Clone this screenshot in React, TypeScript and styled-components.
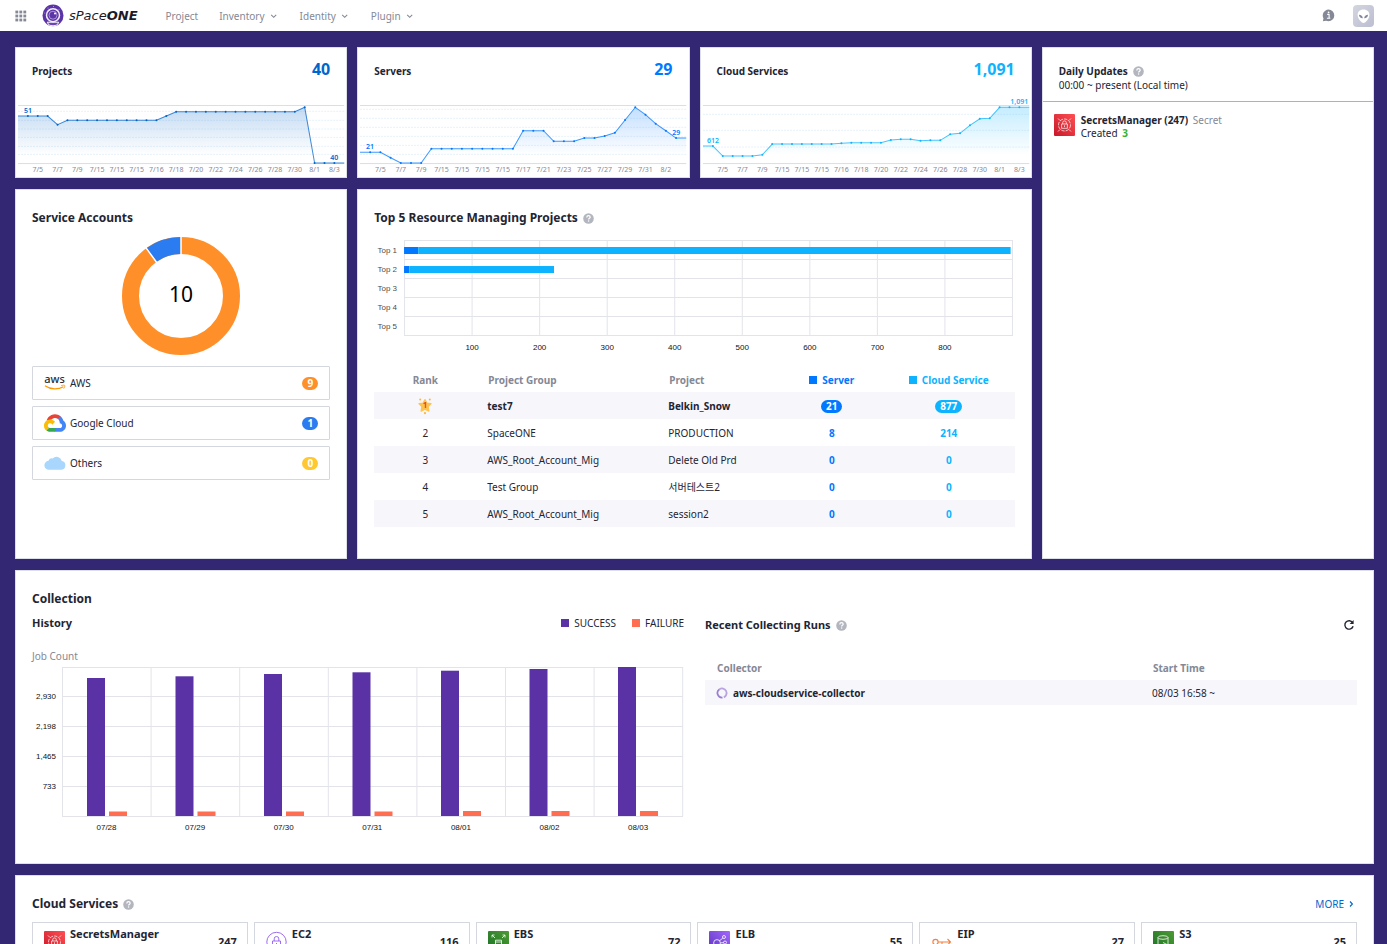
import React from "react";
import styled, { createGlobalStyle } from "styled-components";

const GlobalStyle = createGlobalStyle`
  * { box-sizing: border-box; }
  body {
    margin: 0;
    background: #332673;
    color: #232533;
    font-family: "Noto Sans", "Noto Sans CJK KR", sans-serif;
    font-size: 10px;
    line-height: 14px;
  }
  h2, h3, p, ul, dl { margin: 0; padding: 0; }
  ul { list-style: none; }
  button { font: inherit; color: inherit; background: none; border: 0; padding: 0; cursor: pointer; }
  svg { display: block; flex: none; }
`;

/* ---------- shell ---------- */

const Shell = styled.div`
  display: flex;
  flex-direction: column;
  height: 100vh;
`;

const TopBar = styled.header`
  display: flex;
  align-items: center;
  flex: none;
  height: 31px;
  padding: 0 13px 0 15px;
  background: #fff;
`;

const Brand = styled.a`
  display: flex;
  align-items: center;
  gap: 5px;
  margin-left: 15px;
  color: #1b1b2b;
  text-decoration: none;
`;

const BrandName = styled.span`
  font-family: "DejaVu Sans", sans-serif;
  font-size: 13px;
  line-height: 16px;
  font-style: italic;
  b { font-weight: 700; }
`;

const Nav = styled.nav`
  display: flex;
  flex: 1;
  gap: 21px;
  margin-left: 28px;
`;

const NavItem = styled.button`
  display: flex;
  align-items: center;
  gap: 5px;
  && { color: #858895; }
`;

const BarActions = styled.div`
  display: flex;
  align-items: center;
  gap: 18px;
`;

const Page = styled.main`
  flex: 1;
  overflow-y: auto;
  scrollbar-width: none;
  padding: 16px 13px 16px 15px;
`;

const Grid = styled.div`
  display: grid;
  grid-template-columns: repeat(4, minmax(0, 1fr));
  gap: 11px 10px;
`;

const Card = styled.section<{ $cols?: number; $rows?: number; $minHeight?: number }>`
  grid-column: span ${(p) => p.$cols ?? 1};
  grid-row: span ${(p) => p.$rows ?? 1};
  min-height: ${(p) => p.$minHeight ?? 0}px;
  background: #fff;
  border: 1px solid #dddfe6;
`;

const Padded = styled(Card)`
  padding: 20px 16px 18px;
`;

const Title = styled.h2<{ $size?: number }>`
  display: flex;
  align-items: center;
  gap: 5px;
  font-size: ${(p) => p.$size ?? 12}px;
  line-height: 16px;
  font-weight: 700;
`;

const SubTitle = styled.h3`
  display: flex;
  align-items: center;
  gap: 5px;
  font-size: 11px;
  line-height: 16px;
  font-weight: 700;
`;

const Spread = styled.div<{ $height?: number }>`
  display: flex;
  align-items: center;
  justify-content: space-between;
  height: ${(p) => (p.$height ? `${p.$height}px` : "auto")};
`;

const FluidSvg = styled.svg`
  width: 100%;
  height: auto;
`;

const AxisText = styled.text`
  font-family: "Liberation Sans", sans-serif;
  font-size: 8px;
  fill: #111;
`;

/* ---------- icons ---------- */

const HelpIcon = () => (
  <svg width="11" height="11" viewBox="0 0 11 11" aria-hidden="true">
    <circle cx="5.5" cy="5.5" r="5.3" fill="#b4b6bf" />
    <path d="M3.8 4.4c0-1.100.8-1.700 1.700-1.700s1.700.6 1.700 1.500c0 1.100-1.600 1.100-1.600 2.300" fill="none" stroke="#fff" strokeWidth="1.200" />
    <circle cx="5.600" cy="8.100" r=".75" fill="#fff" />
  </svg>
);

const ChevronDown = () => (
  <svg width="9" height="6" viewBox="0 0 9 6" aria-hidden="true">
    <path d="M1.200 1.800 3.700 4.300l2.500-2.500" fill="none" stroke="#858895" strokeWidth="1.100" />
  </svg>
);

const AppsIcon = () => (
  <svg width="12" height="12" viewBox="0 0 12 12" fill="#858895" aria-hidden="true">
    {[0, 1, 2].map((r) =>
      [0, 1, 2].map((c) => <rect key={`${r}${c}`} x={0.4 + c * 4} y={0.6 + r * 4} width="2.8" height="2.8" />),
    )}
  </svg>
);

const BrandMark = () => (
  <svg width="22" height="23" viewBox="0 0 22 23" aria-hidden="true">
    <ellipse cx="11" cy="11.400" rx="10.500" ry="10.900" fill="#5b34a6" />
    <path d="M5.300 18.200h11.400c-.6 2.400-2.600 3.600-5.700 3.600s-5.100-1.200-5.700-3.600Z" fill="#6b42b8" stroke="#fff" strokeWidth="1" />
    <circle cx="11" cy="11.200" r="6.500" fill="#5b34a6" stroke="#f1ecfa" strokeWidth="1.500" />
    <circle cx="11" cy="11.200" r="4" fill="#5b34a6" stroke="#b49be0" strokeWidth=".9" />
    <circle cx="13" cy="9.500" r="1" fill="#fff" />
    <g fill="#c3b0e8">
      <circle cx="6" cy="4" r=".5" />
      <circle cx="11.500" cy="2.400" r=".5" />
      <circle cx="17" cy="5.200" r=".5" />
      <circle cx="2.800" cy="9" r=".5" />
    </g>
  </svg>
);

const InfoIcon = () => (
  <svg width="13" height="13" viewBox="0 0 13 13" aria-hidden="true">
    <path d="M6.500.6a5.800 5.800 0 0 1 0 11.600c-.9 0-1.800-.2-2.500-.5L.9 12.300l.6-3A5.800 5.800 0 0 1 6.500.6Z" fill="#858895" />
    <path d="M5.200 5.400h1.900v3.800M4.900 9.300h3.400" stroke="#fff" strokeWidth="1.100" fill="none" />
    <circle cx="6.600" cy="3.300" r=".9" fill="#fff" />
  </svg>
);

const Avatar = () => (
  <svg width="21" height="22" viewBox="0 0 21 22" aria-hidden="true">
    <defs>
      <linearGradient id="avatar" x1="0" y1="0" x2="1" y2="1">
        <stop offset="0" stopColor="#d3d5df" />
        <stop offset="1" stopColor="#bcbed2" />
      </linearGradient>
    </defs>
    <rect width="21" height="22" rx="4" fill="url(#avatar)" />
    <path d="M10.500 4.500c3.700 0 5.900 2.400 5.900 5.300 0 3.800-3.700 8.200-5.900 8.200s-5.900-4.400-5.900-8.200c0-2.900 2.200-5.300 5.900-5.300Z" fill="#fff" />
    <path d="M6 9.800c2.200 0 3.700 1.200 3.800 3.400-2.200.1-3.800-1.300-3.800-3.400ZM15 9.800c-2.200 0-3.700 1.200-3.800 3.400 2.200.1 3.800-1.300 3.800-3.400Z" fill="#85889c" />
  </svg>
);

const AwsLogo = () => (
  <svg width="22" height="18" viewBox="0 0 22 18" overflow="visible" aria-hidden="true">
    <text x="10.500" y="9.200" textAnchor="middle" fontFamily="Noto Sans" fontSize="11" fontWeight="500" fill="#252f3e">aws</text>
    <path d="M1 11.800c5.600 4 13.200 4 18.400.9" fill="none" stroke="#ff9900" strokeWidth="1.300" />
    <path d="M17.200 11.700c1.500-.6 3-.7 3.500-.3.400.5-.1 2-1 3.200" fill="none" stroke="#ff9900" strokeWidth=".9" />
  </svg>
);

const GoogleCloudLogo = () => (
  <svg width="22" height="18" viewBox="0 0 256 206" aria-hidden="true">
    <path fill="#EA4335" d="M170.252 56.819 192.505 34.566 193.988 25.196C153.437-11.677 88.976-7.496 52.421 33.920 42.267 45.423 34.734 59.764 30.717 74.573L38.687 73.450 83.192 66.111 86.628 62.597C106.425 40.855 139.898 37.930 162.756 56.429Z" />
    <path fill="#4285F4" d="M224.205 73.918C219.090 55.082 208.589 38.149 193.988 25.196L162.756 56.428C175.944 67.204 183.457 83.438 183.135 100.465L183.135 106.009C198.486 106.009 210.932 118.454 210.932 133.805 210.932 149.157 198.486 161.290 183.135 161.290L127.464 161.290 121.998 167.224 121.998 200.564 127.464 205.795 183.135 205.795C223.065 206.106 255.687 174.301 255.998 134.371 256.186 110.168 244.253 87.478 224.205 73.918" />
    <path fill="#34A853" d="M71.870 205.796 127.463 205.796 127.463 161.290 71.870 161.290C67.909 161.289 64.073 160.438 60.471 158.792L52.584 161.212 30.175 183.465 28.223 191.039C40.790 200.528 56.123 205.864 71.870 205.796" />
    <path fill="#FBBC05" d="M71.870 61.426C31.939 61.664-.237 94.228.001 134.158.134 156.456 10.548 177.446 28.223 191.039L60.471 158.792C46.480 152.471 40.263 136.006 46.584 122.016 52.904 108.026 69.370 101.809 83.359 108.129 89.524 110.914 94.461 115.852 97.246 122.016L129.494 89.769C115.773 71.832 94.453 61.345 71.870 61.426" />
  </svg>
);

const CloudLogo = () => (
  <svg width="22" height="18" viewBox="0 0 22 18" fill="#a9d6fd" aria-hidden="true">
    <path d="M5.300 15.800a4.500 4.500 0 0 1-.8-9 3.800 3.800 0 0 1 4.200-2.400A5.400 5.400 0 0 1 17.800 6.900a4.500 4.500 0 0 1-.8 8.900Z" />
  </svg>
);

const RankStar = () => (
  <svg width="16" height="18" viewBox="0 0 16 18" aria-hidden="true">
    <path d="m8 2.600 1.900 3.500 4.200.6-2.900 2.900.7 4.600L8 12.300l-3.900 1.900.7-4.600-2.900-2.900 4.200-.6Z" fill="#ffc34d" stroke="#ffc34d" strokeWidth="1.200" strokeLinejoin="round" />
    <g fill="#ffb53a">
      <circle cx="3.200" cy="2.600" r="1" />
      <circle cx="12.800" cy="2.600" r="1" />
      <circle cx="8" cy="16.200" r="1.100" />
    </g>
    <text x="8" y="11" textAnchor="middle" fontFamily="Noto Sans" fontSize="8" fontWeight="700" fill="#e5452f">1</text>
  </svg>
);

const RefreshIcon = () => (
  <svg width="12" height="12" viewBox="0 0 12 12" aria-hidden="true">
    <path d="M9.600 3.600A4.200 4.200 0 1 0 10.100 7.200" fill="none" stroke="#232533" strokeWidth="1.400" />
    <path d="M10.600 1v4H6.600Z" fill="#232533" />
  </svg>
);

const SpinnerIcon = () => (
  <svg width="12" height="12" viewBox="0 0 12 12" aria-hidden="true">
    <path d="M3.500 2.200A4.600 4.600 0 1 1 7.800 10.300" fill="none" stroke="#b9a4e0" strokeWidth="1.800" />
    <path d="M6.500 10.600A4.600 4.600 0 0 1 3.500 2.200" fill="none" stroke="#9b7fd0" strokeWidth="1.800" />
  </svg>
);

type ServiceKind = "secrets" | "ec2" | "ebs" | "elb" | "eip" | "s3";

const tiles: Partial<Record<ServiceKind, [string, string]>> = {
  secrets: ["#c7182b", "#ff4f52"],
  ebs: ["#1c6f28", "#4d9a34"],
  elb: ["#5a34b8", "#a166ff"],
  s3: ["#1c6f28", "#4d9a34"],
};

const glyphs: Record<ServiceKind, React.ReactNode> = {
  secrets: (
    <g fill="none" stroke="#fff" strokeWidth=".7">
      <circle cx="10.500" cy="11" r="6" strokeDasharray="3.500 1" />
      <path d="M4 4.500 6 6.500M17 4.500l-2 2M4 17.500l2-2M17 17.500l-2-2" />
      <path d="M7.600 10h5.800v4.300H7.600ZM8.700 10V8.700a1.800 1.800 0 0 1 3.600 0V10M10.500 11.300v1.800" />
    </g>
  ),
  ec2: (
    <g fill="none" stroke="#9d6cf0" strokeWidth="1">
      <circle cx="10.500" cy="11" r="9.700" />
      <path d="M6.500 10h8v5.500h-8ZM8.200 10V7.800a2.300 2.300 0 0 1 4.600 0V10M10.500 12v1.700" />
    </g>
  ),
  ebs: (
    <g fill="none" stroke="#fff" strokeWidth=".8">
      <path d="M7.500 9.200h6V18h-6ZM7.500 11h6M4 4l3 3M17 4l-3 3M4 6.500V4h2.500M17 6.500V4h-2.500M4 18l2-2M17 18l-2-2" />
    </g>
  ),
  elb: (
    <g fill="none" stroke="#fff" strokeWidth=".8">
      <circle cx="8" cy="12" r="3.400" />
      <circle cx="15" cy="6" r="1.500" />
      <circle cx="16" cy="11.500" r="1.500" />
      <circle cx="15" cy="17" r="1.500" />
      <path d="m10.500 9.800 3.300-2.700M11.400 11.900l3.100-.2M10.500 14.200l3.300 2" />
    </g>
  ),
  eip: (
    <g fill="none" stroke="#f08044" strokeWidth="1.100">
      <circle cx="4.500" cy="11" r="2.600" />
      <path d="M7.100 11h12M16.500 8l3 3-3 3M11 11v3" />
    </g>
  ),
  s3: (
    <g fill="none" stroke="#fff" strokeWidth=".8">
      <ellipse cx="10" cy="6.500" rx="5" ry="1.800" />
      <path d="M5 6.500V16c0 2.300 10 2.300 10 0V6.500M10 11.500l6 3" />
    </g>
  ),
};

const ServiceIcon = ({ kind }: { kind: ServiceKind }) => {
  const tile = tiles[kind];
  const id = `tile-${kind}`;
  return (
    <svg width="21" height="22" viewBox="0 0 21 22" aria-hidden="true">
      {tile && (
        <>
          <defs>
            <linearGradient id={id} x1="0" y1="1" x2="1" y2="0">
              <stop offset="0" stopColor={tile[0]} />
              <stop offset="1" stopColor={tile[1]} />
            </linearGradient>
          </defs>
          <rect width="21" height="22" rx="1" fill={`url(#${id})`} />
        </>
      )}
      {glyphs[kind]}
    </svg>
  );
};

/* ---------- trend cards ---------- */

const TrendCard = styled(Card)`
  display: flex;
  flex-direction: column;
  justify-content: space-between;
`;

const TrendHead = styled.div`
  display: flex;
  align-items: center;
  justify-content: space-between;
  height: 45px;
  padding: 0 16px;
`;

const Total = styled.strong<{ $color: string }>`
  padding-bottom: 3px;
  font-size: 16px;
  line-height: 20px;
  color: ${(p) => p.$color};
`;

const TrendText = styled.text`
  font-family: "Noto Sans", sans-serif;
  font-size: 7px;
  text-anchor: middle;
`;

const TrendValue = styled(TrendText)`
  font-weight: 600;
`;

const fill = (n: number, v: number): number[] => Array(n).fill(v);

type Trend = {
  id: string;
  title: string;
  total: string;
  first: string;
  color: string;
  levels: number[];
  grid: number[];
  labels: string[];
};

const longLabels = "7/5 7/7 7/9 7/15 7/15 7/15 7/16 7/18 7/20 7/22 7/24 7/26 7/28 7/30 8/1 8/3".split(" ");

const trends: Trend[] = [
  {
    id: "projects",
    title: "Projects",
    total: "40",
    first: "51",
    color: "#0066cc",
    levels: [...fill(4, 23), 31.7, ...fill(10, 27.3), 23, ...fill(13, 18.7), 14.3, ...fill(4, 70)],
    grid: [18.3, 27.3, 36, 44.3, 53.3, 61.3],
    labels: longLabels,
  },
  {
    id: "servers",
    title: "Servers",
    total: "29",
    first: "21",
    color: "#0078ff",
    levels: [
      ...fill(3, 59.3), 64.7, ...fill(3, 70), ...fill(9, 55.7), ...fill(3, 37.7), ...fill(3, 48.3),
      45, 45, 43, 39.7, 27, 14.3, 21.7, 30.7, 37.7, 45, 45,
    ],
    grid: [16.3, 25.3, 34.3, 43.3, 52.3, 61.3],
    labels: "7/5 7/7 7/9 7/15 7/15 7/15 7/15 7/17 7/21 7/23 7/25 7/27 7/29 7/31 8/2".split(" "),
  },
  {
    id: "cloud",
    title: "Cloud Services",
    total: "1,091",
    first: "612",
    color: "#0db3ff",
    levels: [
      53, 53, ...fill(4, 63), 61.7, ...fill(7, 51), 50.3, ...fill(4, 49.7), 47, 46.3, 46.3, 47.7,
      47.3, 47.3, 41.3, 40.3, 32.3, 25.7, 25.3, ...fill(4, 14.3),
    ],
    grid: [21.3, 37.3, 54],
    labels: longLabels,
  },
];

const TrendPanel = ({ t }: { t: Trend }) => {
  const step = 326 / (t.levels.length - 1);
  const pts = t.levels.map((y, i) => [2 + i * step, y]);
  const line = pts.map(([x, y]) => `${x.toFixed(1)},${y}`).join(" ");
  return (
    <TrendCard $minHeight={131}>
      <TrendHead>
        <Title $size={10}>{t.title}</Title>
        <Total $color={t.color}>{t.total}</Total>
      </TrendHead>
      <FluidSvg viewBox="0 0 330 84" role="img" aria-label={t.title}>
        <defs>
          <linearGradient id={t.id} x1="0" y1="12" x2="0" y2="62" gradientUnits="userSpaceOnUse">
            <stop offset="0" stopColor={t.color} stopOpacity=".25" />
            <stop offset="1" stopColor={t.color} stopOpacity="0" />
          </linearGradient>
        </defs>
        {t.grid.map((y) => (
          <line key={y} x1="2" x2="328" y1={y} y2={y} stroke="#dcecf8" strokeWidth=".7" strokeDasharray="2 1" />
        ))}
        <path d="M2 12.500h326M2 70.500h326" stroke="#bcdcf2" strokeWidth=".8" />
        <polygon points={`2,70 ${line} 328,70`} fill={`url(#${t.id})`} />
        <polyline points={line} fill="none" stroke={t.color} strokeOpacity=".75" strokeWidth="1" />
        {pts.slice(1, -1).map(([x, y]) => (
          <circle key={x} cx={x} cy={y} r="1" fill={t.color} />
        ))}
        <TrendValue x="12" y={t.levels[0] - 3} fill={t.color}>{t.first}</TrendValue>
        <TrendValue x="318" y={t.levels[t.levels.length - 1] - 3} fill={t.color}>{t.total}</TrendValue>
        {t.labels.map((l, i) => (
          <TrendText key={i} x={2 + (2 + i * 2) * step} y="79" fill="#858895">{l}</TrendText>
        ))}
      </FluidSvg>
    </TrendCard>
  );
};

/* ---------- daily updates ---------- */

const DailyHead = styled.div`
  padding: 15px 16px 9px;
  border-bottom: 1px solid #b0b1ba;
  line-height: 13px;
`;

const UpdateRow = styled.div`
  display: flex;
  gap: 6px;
  padding: 12px 11px;
  line-height: 13px;
`;

const Muted = styled.span`
  margin-left: 2px;
  color: #858895;
`;

const Created = styled.b`
  margin-left: 2px;
  color: #3cb027;
`;

/* ---------- service accounts ---------- */

const Donut = styled.svg`
  margin: 10px auto;
`;

const AccountList = styled.ul`
  display: flex;
  flex-direction: column;
  gap: 6px;
`;

const Account = styled.li`
  display: flex;
  align-items: center;
  gap: 4px;
  height: 34px;
  padding: 0 11px;
  border: 1px solid #d5d7de;
  border-radius: 1px;
`;

const AccountName = styled.span`
  flex: 1;
`;

const Pill = styled.span<{ $bg: string }>`
  display: inline-block;
  min-width: 16px;
  padding: 0 5px;
  border-radius: 7px;
  background: ${(p) => p.$bg};
  color: #fff;
  font-weight: 700;
  line-height: 13px;
  text-align: center;
`;

/* ---------- top projects ---------- */

const TopChart = styled(FluidSvg)`
  margin-top: 10px;
`;

const Table = styled.table<{ $top: number }>`
  width: 100%;
  margin-top: ${(p) => p.$top}px;
  border-collapse: collapse;
  table-layout: fixed;
`;

const HeadCell = styled.th<{ $align?: string; $color?: string; $height?: number }>`
  height: ${(p) => p.$height ?? 24}px;
  padding: 0 12px;
  font-weight: 700;
  text-align: ${(p) => p.$align ?? "left"};
  color: ${(p) => p.$color ?? "#858895"};
`;

const BodyRow = styled.tr<{ $height: number; $bold?: boolean }>`
  height: ${(p) => p.$height}px;
  font-weight: ${(p) => (p.$bold ? 700 : 400)};
  &:nth-child(odd) { background: #f7f7fb; }
`;

const Cell = styled.td<{ $align?: string; $color?: string }>`
  padding: 0 11px;
  text-align: ${(p) => p.$align ?? "left"};
  color: ${(p) => p.$color ?? "inherit"};
  font-weight: ${(p) => (p.$color ? 700 : "inherit")};
  svg { margin: 0 auto; }
`;

const Swatch = styled.i<{ $color: string }>`
  display: inline-block;
  width: 8px;
  height: 8px;
  margin-right: 5px;
  background: ${(p) => p.$color};
`;

const BLUE = "#0078ff";
const SKY = "#0db3ff";

const projects = [
  ["test7", "Belkin_Snow", 21, 877],
  ["SpaceONE", "PRODUCTION", 8, 214],
  ["AWS_Root_Account_Mig", "Delete Old Prd", 0, 0],
  ["Test Group", "서버테스트2", 0, 0],
  ["AWS_Root_Account_Mig", "session2", 0, 0],
] as const;

const UNIT = 0.675;

const TopProjectsChart = () => (
  <TopChart viewBox="0 0 640 117" role="img" aria-label="Resources by project">
    <g stroke="#e3e4ea" strokeWidth="1">
      {[0, 1, 2, 3, 4, 5].map((i) => (
        <line key={i} x1="30" x2="638" y1={4.5 + i * 19} y2={4.5 + i * 19} />
      ))}
      {[0, 1, 2, 3, 4, 5, 6, 7, 8].map((i) => (
        <line key={i} x1={30.5 + i * 67.5} x2={30.5 + i * 67.5} y1="4" y2="100" />
      ))}
      <line x1="638" x2="638" y1="4" y2="100" />
    </g>
    {projects.map(([, , server, cloud], i) => (
      <g key={i}>
        <AxisText x="23" y={17 + i * 19} textAnchor="end" fillOpacity=".8">{`Top ${i + 1}`}</AxisText>
        <rect x="30" y={11 + i * 19} width={server * UNIT} height="7" fill={BLUE} />
        <rect x={30 + server * UNIT} y={11 + i * 19} width={cloud * UNIT} height="7" fill={SKY} />
      </g>
    ))}
    {[100, 200, 300, 400, 500, 600, 700, 800].map((v) => (
      <AxisText key={v} x={30.5 + v * UNIT} y="114" textAnchor="middle">{v}</AxisText>
    ))}
  </TopChart>
);

/* ---------- collection ---------- */

const Collection = styled.div`
  display: grid;
  grid-template-columns: minmax(0, 1fr) minmax(0, 1fr);
  gap: 21px;
`;

const Legend = styled.ul`
  display: flex;
  gap: 16px;
`;

const JobLabel = styled.p`
  margin-top: 10px;
  color: #858895;
`;

const history = [138, 139.7, 142, 143.7, 145.3, 147, 149];
const failures = [4.5, 4.5, 4.5, 4.5, 5, 5, 5];
const days = ["07/28", "07/29", "07/30", "07/31", "08/01", "08/02", "08/03"];

const HistoryChart = () => (
  <FluidSvg viewBox="0 0 652 172" role="img" aria-label="Job count by day">
    <g stroke="#e3e4ea" strokeWidth="1">
      {[4.5, 33.5, 63.5, 93.5, 123.5, 153.5].map((y) => (
        <line key={y} x1="30" x2="651" y1={y} y2={y} />
      ))}
      {[0, 1, 2, 3, 4, 5, 6, 7].map((i) => (
        <line key={i} x1={30.5 + i * 88.6} x2={30.5 + i * 88.6} y1="4" y2="153" />
      ))}
    </g>
    {["2,930", "2,198", "1,465", "733"].map((v, i) => (
      <AxisText key={v} x="24" y={36 + i * 30} textAnchor="end">{v}</AxisText>
    ))}
    {days.map((d, i) => (
      <g key={d}>
        <rect x={55 + i * 88.5} y={153 - history[i]} width="18" height={history[i]} fill="#5b32a6" />
        <rect x={77 + i * 88.5} y={153 - failures[i]} width="18" height={failures[i]} fill="#ff6e50" />
        <AxisText x={74.5 + i * 88.6} y="167" textAnchor="middle">{d}</AxisText>
      </g>
    ))}
  </FluidSvg>
);

const RefreshButton = styled.button`
  && { padding-right: 2px; }
`;

const RunName = styled.span`
  display: flex;
  align-items: center;
  gap: 5px;
  font-weight: 700;
`;

/* ---------- cloud services ---------- */

const More = styled.a`
  display: flex;
  align-items: center;
  gap: 5px;
  margin-right: 3px;
  color: #0066cc;
  text-decoration: none;
`;

const ServiceList = styled.ul`
  display: grid;
  grid-template-columns: repeat(6, minmax(0, 1fr));
  gap: 6px;
  margin-top: 10px;
`;

const Service = styled.li`
  display: flex;
  gap: 5px;
  height: 40px;
  padding: 8px 10px 8px 11px;
  border: 1px solid #d5d7de;
  font-size: 11px;
  line-height: 22px;
`;

const ServiceName = styled.b`
  flex: 1;
  line-height: 6px;
`;

const services: [ServiceKind, string, number][] = [
  ["secrets", "SecretsManager", 247],
  ["ec2", "EC2", 116],
  ["ebs", "EBS", 72],
  ["elb", "ELB", 55],
  ["eip", "EIP", 27],
  ["s3", "S3", 25],
];

export default function App() {
  return (
    <Shell>
      <GlobalStyle />
      <TopBar>
        <button aria-label="Apps"><AppsIcon /></button>
        <Brand href="#">
          <BrandMark />
          <BrandName>sPace<b>ONE</b></BrandName>
        </Brand>
        <Nav>
          <NavItem>Project</NavItem>
          {["Inventory", "Identity", "Plugin"].map((n) => (
            <NavItem key={n}>{n}<ChevronDown /></NavItem>
          ))}
        </Nav>
        <BarActions>
          <button aria-label="Information"><InfoIcon /></button>
          <button aria-label="Account"><Avatar /></button>
        </BarActions>
      </TopBar>
      <Page>
        <Grid>
          {trends.map((t) => <TrendPanel key={t.id} t={t} />)}

          <Card $rows={2}>
            <DailyHead>
              <Title $size={10}>Daily Updates <HelpIcon /></Title>
              <p>00:00 ~ present (Local time)</p>
            </DailyHead>
            <UpdateRow>
              <ServiceIcon kind="secrets" />
              <div>
                <p><b>SecretsManager (247)</b> <Muted>Secret</Muted></p>
                <p>Created <Created>3</Created></p>
              </div>
            </UpdateRow>
          </Card>

          <Padded $minHeight={370}>
            <Title>Service Accounts</Title>
            <Donut width="120" height="120" viewBox="0 0 120 120" role="img" aria-label="10 accounts">
              <circle cx="60" cy="60" r="50.500" fill="none" stroke="#ff8f28" strokeWidth="17" />
              <path d="M60 9.500A50.500 50.500 0 0 0 30.300 19.100" fill="none" stroke="#2b7cf0" strokeWidth="17" />
              <path d="M60 0v19M24.700 11.400l11.200 15.400" stroke="#fff" strokeWidth="1.500" />
              <text x="60" y="66" textAnchor="middle" fontFamily="Noto Sans" fontSize="21" fill="#000">10</text>
            </Donut>
            <AccountList>
              <Account><AwsLogo /><AccountName>AWS</AccountName><Pill $bg="#ff8f28">9</Pill></Account>
              <Account><GoogleCloudLogo /><AccountName>Google Cloud</AccountName><Pill $bg="#2b7cf0">1</Pill></Account>
              <Account><CloudLogo /><AccountName>Others</AccountName><Pill $bg="#ffc730">0</Pill></Account>
            </AccountList>
          </Padded>

          <Padded $cols={2}>
            <Title>Top 5 Resource Managing Projects <HelpIcon /></Title>
            <TopProjectsChart />
            <Table $top={15}>
              <colgroup>
                <col width="102" />
                <col width="181" />
                <col />
                <col width="102" />
                <col width="132" />
              </colgroup>
              <thead>
                <tr>
                  <HeadCell $align="center">Rank</HeadCell>
                  <HeadCell>Project Group</HeadCell>
                  <HeadCell>Project</HeadCell>
                  <HeadCell $align="center" $color={BLUE}><Swatch $color={BLUE} />Server</HeadCell>
                  <HeadCell $align="center" $color={SKY}><Swatch $color={SKY} />Cloud Service</HeadCell>
                </tr>
              </thead>
              <tbody>
                {projects.map(([group, project, server, cloud], i) => (
                  <BodyRow key={i} $height={27} $bold={i === 0}>
                    <Cell $align="center">{i === 0 ? <RankStar /> : i + 1}</Cell>
                    <Cell>{group}</Cell>
                    <Cell>{project}</Cell>
                    <Cell $align="center" $color={BLUE}>{i === 0 ? <Pill $bg={BLUE}>{server}</Pill> : server}</Cell>
                    <Cell $align="center" $color={SKY}>{i === 0 ? <Pill $bg={SKY}>{cloud}</Pill> : cloud}</Cell>
                  </BodyRow>
                ))}
              </tbody>
            </Table>
          </Padded>

          <Padded $cols={4} $minHeight={294}>
            <Title>Collection</Title>
            <Collection>
              <div>
                <Spread $height={32}>
                  <SubTitle>History</SubTitle>
                  <Legend>
                    <li><Swatch $color="#5b32a6" />SUCCESS</li>
                    <li><Swatch $color="#ff6e50" />FAILURE</li>
                  </Legend>
                </Spread>
                <JobLabel>Job Count</JobLabel>
                <HistoryChart />
              </div>
              <div>
                <Spread $height={36}>
                  <SubTitle>Recent Collecting Runs <HelpIcon /></SubTitle>
                  <RefreshButton aria-label="Refresh"><RefreshIcon /></RefreshButton>
                </Spread>
                <Table $top={12}>
                  <colgroup>
                    <col />
                    <col width="216" />
                  </colgroup>
                  <thead>
                    <tr>
                      <HeadCell $height={25}>Collector</HeadCell>
                      <HeadCell>Start Time</HeadCell>
                    </tr>
                  </thead>
                  <tbody>
                    <BodyRow $height={25}>
                      <Cell><RunName><span><SpinnerIcon /></span>aws-cloudservice-collector</RunName></Cell>
                      <Cell>08/03 16:58 ~</Cell>
                    </BodyRow>
                  </tbody>
                </Table>
              </div>
            </Collection>
          </Padded>

          <Padded $cols={4}>
            <Spread>
              <Title>Cloud Services <HelpIcon /></Title>
              <More href="#more">
                MORE
                <svg width="5" height="8" viewBox="0 0 5 8" aria-hidden="true">
                  <path d="m1 1.500 2.400 2.500L1 6.500" fill="none" stroke="#0066cc" strokeWidth="1.100" />
                </svg>
              </More>
            </Spread>
            <ServiceList>
              {services.map(([kind, name, count]) => (
                <Service key={kind}>
                  <ServiceIcon kind={kind} />
                  <ServiceName>{name}</ServiceName>
                  <b>{count}</b>
                </Service>
              ))}
            </ServiceList>
          </Padded>
        </Grid>
      </Page>
    </Shell>
  );
}
